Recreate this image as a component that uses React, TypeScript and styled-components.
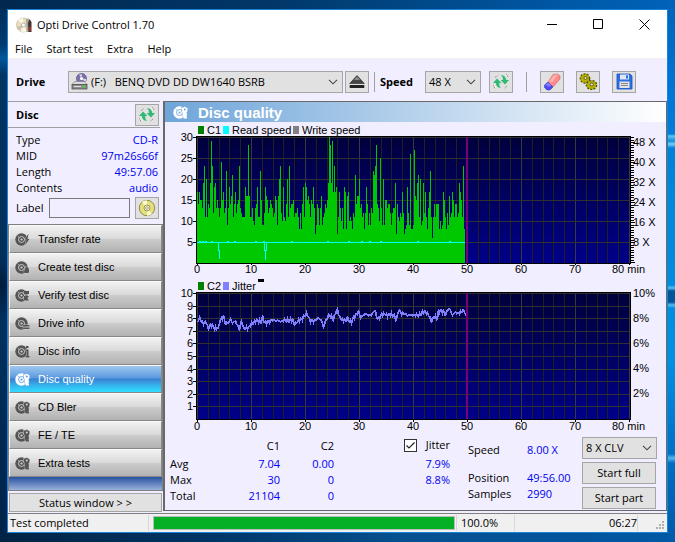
import React from 'react';
import styled, { createGlobalStyle, css } from 'styled-components';

const ui = '"Open Sans", "Noto Sans", sans-serif';
const arial = '"Liberation Sans", Arial, sans-serif';

const GlobalStyle = createGlobalStyle`
  * { box-sizing: border-box; }
  body { margin: 0; font: 11px/16px ${ui}; color: #000; }
  button, select, input { font: inherit; color: inherit; margin: 0; }
  svg { display: block; }
`;

const Desktop = styled.div`
  min-height: 100vh;
  padding: 9px 7px;
  display: flex;
  background:
    linear-gradient(180deg, transparent 0 134px, #5cc8f2 136px, #0b8ee0 141px, #7bd0f2 144px, transparent 148px 285px,
      #54c0ee 288px, #00559c 291px 302px, #54c0ee 305px, transparent 308px 454px, #55b8ee 458px, transparent 463px) right / 7px 100% no-repeat,
    linear-gradient(180deg, #0062b8 0, #0078d7 100px, #0088dc 200px, #0090e4 360px, #0068bc 480px, #005aa8) right / 7px 100% no-repeat,
    linear-gradient(90deg, #01284f, #013768 40%, #0059a8 85%, #0062b8) top / 100% 9px no-repeat,
    linear-gradient(90deg, #012343, #003465 30%, #06508f 60%, #0058a4) bottom / 100% 9px no-repeat,
    linear-gradient(180deg, #012b54, #003c70 45px, #00569a 58px, #003463 75px, #012f5a 260px, #001c3b 285px, #00315f 320px, #002348 540px) left / 7px 100% no-repeat,
    #0073cc;
`;

const AppWindow = styled.main`
  flex: 1;
  min-width: 0;
  display: flex;
  flex-direction: column;
  border: 1px solid #1883d7;
  background: #f0eeff;
`;

const TitleBar = styled.header`
  height: 29px;
  padding-left: 8px;
  display: flex;
  align-items: center;
  gap: 5px;
  background: #fff;
`;
const Title = styled.h1`
  flex: 1;
  margin: 0;
  font-size: 11px;
  font-weight: 400;
`;
const CaptionButtons = styled.div`
  display: flex;
`;
const CaptionButton = styled.button`
  width: 46px;
  height: 29px;
  padding: 0;
  border: 0;
  background: none;
  display: grid;
  place-items: center;
`;

const MenuBar = styled.nav`
  height: 19px;
  padding: 1px 0 0 7px;
  display: flex;
  align-items: center;
  gap: 14px;
  background: #fff;
`;
const MenuButton = styled.button`
  padding: 0;
  border: 0;
  background: none;
`;

const Toolbar = styled.div`
  height: 43px;
  padding: 3px 31px 0 8px;
  display: flex;
  align-items: center;
  border-top: 1px solid #f0f0f0;
`;
const ToolLabel = styled.label<{ $width: number }>`
  width: ${p => p.$width}px;
  font-weight: 700;
`;
const Divider = styled.span<{ $gap: number }>`
  width: 1px;
  height: 20px;
  margin: 0 ${p => p.$gap}px;
  background: #a0a0a0;
`;
const face = css`
  border: 1px solid #a5a5a5;
  background: #e1e1e1;
`;
const IconButton = styled.button`
  ${face}
  width: 24px;
  height: 22px;
  padding: 0;
  display: grid;
  place-items: center;
  flex: none;
`;
const ToolGroup = styled.div<{ $gap: number }>`
  display: flex;
  gap: ${p => p.$gap}px;
`;

const SelectBox = styled.div<{ $icon?: boolean; $width?: number }>`
  ${face}
  height: 22px;
  display: grid;
  align-items: center;
  ${p => (p.$width ? `width: ${p.$width}px; flex: none;` : 'flex: 1; min-width: 0; margin-right: 2px;')}
  & > * { grid-area: 1 / 1; }
  select {
    width: 100%;
    height: 20px;
    padding: 0 18px 0 ${p => (p.$icon ? 22 : 3)}px;
    border: 0;
    background: none;
    appearance: none;
    white-space: pre;
  }
  svg { pointer-events: none; }
  svg.chevron { justify-self: end; margin-right: 4px; }
  svg.lead { margin-left: 2px; }
`;

const Body = styled.div`
  flex: 1;
  display: grid;
  grid-template-columns: 155px minmax(0, 1fr);
`;

const Sidebar = styled.aside`
  display: flex;
  flex-direction: column;
`;
const DiscHeader = styled.div`
  height: 27px;
  margin-right: 3px;
  padding: 0 1px 0 8px;
  display: flex;
  align-items: center;
  justify-content: space-between;
  border-top: 1px solid #a0a0a0;
  border-bottom: 1px solid #a0a0a0;
  h2 { margin: 0; font-size: 11px; }
`;
const DiscFacts = styled.dl`
  margin: 0;
  padding: 4px 5px 0 8px;
  display: grid;
  grid-template-columns: auto 1fr;
  grid-auto-rows: 16px;
  dt, dd { margin: 0; }
  dd { text-align: right; color: #0000f0; }
`;
const LabelRow = styled.div`
  height: 28px;
  padding: 0 4px 4px 8px;
  display: flex;
  align-items: center;
  justify-content: space-between;
  gap: 5px;
  input {
    flex: 1;
    min-width: 0;
    height: 20px;
    border: 1px solid #7a7a7a;
    background: #f0eeff;
  }
`;
const TestList = styled.nav`
  flex: 1;
  display: flex;
  flex-direction: column;
  border: 1px solid #808080;
  background: linear-gradient(#1f4a9c, #9ab2da) bottom / 100% 14px no-repeat;
`;
const TestButton = styled.button<{ $on?: boolean }>`
  height: 28px;
  padding: 0 5px;
  display: flex;
  align-items: center;
  gap: 8px;
  border: 1px solid #f8f8f8;
  border-right-color: #888;
  border-bottom: 1px solid #888;
  font: 11px ${arial};
  color: ${p => (p.$on ? '#fff' : '#000')};
  background: ${p =>
    p.$on
      ? 'linear-gradient(#9fc8ef, #5c9be0 45%, #3a80d2 50%, #35b4ee 75%, #30dcff)'
      : 'linear-gradient(#f2f2f2, #dadada 48%, #cbcbcb 52%, #b2b2b2)'};
`;
const StatusToggle = styled.button`
  ${face}
  height: 19px;
  margin: 2px 1px 1px 1px;
  padding: 0;
`;

const Panel = styled.section`
  display: flex;
  flex-direction: column;
  border: 1px solid #696969;
  border-left-width: 2px;
  margin-bottom: 2px;
`;
const PanelTitle = styled.h2`
  height: 20px;
  margin: 0;
  padding-left: 8px;
  display: flex;
  align-items: center;
  gap: 10px;
  color: #fff;
  font: 700 15px ${arial};
  background: linear-gradient(90deg, #6fa5d9, #fff);
`;
const Plot = styled.svg`
  width: 100%;
  height: auto;
  font: 11px ${arial};
`;

const Results = styled.div`
  height: 78px;
  padding: 5px 8px 0 5px;
  display: grid;
  grid-template-columns: 280px minmax(0, 1fr) 76px;
  column-gap: 18px;
`;
const StatTable = styled.table`
  width: 280px;
  height: 64px;
  table-layout: fixed;
  border-collapse: collapse;
  th, td { height: 16px; padding: 0; font-weight: 400; text-align: right; }
  th:first-child { text-align: left; width: 56px; }
  td { color: #0000f0; }
  th:nth-child(2) { width: 54px; }
  th:nth-child(3) { width: 54px; }
`;
const CheckLabel = styled.label`
  display: inline-flex;
  align-items: center;
  gap: 9px;
  input {
    appearance: none;
    width: 13px;
    height: 13px;
    border: 1px solid #333;
    background: #fff url("data:image/svg+xml,%3Csvg xmlns='http://www.w3.org/2000/svg' viewBox='0 0 11 11'%3E%3Cpath d='M1.5 5.5l2.5 2.5 5.5-5.5' fill='none' stroke='%23222' stroke-width='1.2'/%3E%3C/svg%3E");
  }
`;
const Progress = styled.dl`
  margin: 0;
  padding-top: 5px;
  display: grid;
  grid-template-columns: 59px 1fr;
  grid-template-rows: 28px 16px 16px;
  dt, dd { margin: 0; white-space: nowrap; }
  dd { color: #0000f0; }
`;
const Actions = styled.div`
  display: flex;
  flex-direction: column;
  gap: 3px;
`;
const PushButton = styled.button`
  ${face}
  width: 74px;
  height: 22px;
  padding: 0;
`;

const StatusBar = styled.footer`
  height: 19px;
  display: grid;
  grid-template-columns: 141px minmax(0, 1fr) 58px 123px 29px;
  align-items: center;
  border-top: 1px solid #808080;
  background: #f0f0f0;
  & > * { height: 16px; border-right: 1px solid #d7d7d7; }
  & > :last-child { border: 0; }
`;
const StatusText = styled.span<{ $end?: boolean; $pad?: number }>`
  padding-left: ${p => p.$pad ?? 2}px;
  text-align: ${p => (p.$end ? 'right' : 'left')};
`;
const BarCell = styled.div`
  display: flex;
  padding: 1px 1px 1px 4px;
  progress {
    appearance: none;
    width: 100%;
    height: 14px;
    border: 1px solid #bcbcbc;
    background: #e6e6e6;
  }
  progress::-webkit-progress-bar { background: #e6e6e6; }
  progress::-webkit-progress-value { background: #06b025; }
`;
const Grip = styled.div`
  display: flex;
  justify-content: flex-end;
  align-items: flex-end;
  padding: 0 2px 1px 0;
`;

/* ---------- icons ---------- */

const Chevron = () => (
  <svg className="chevron" width="10" height="6" viewBox="0 0 10 6">
    <path d="M1 .8l4 4 4-4" fill="none" stroke="#444" strokeWidth="1.1" />
  </svg>
);

const AppIcon = () => (
  <svg width="16" height="16" viewBox="0 0 16 16">
    <circle cx="7.5" cy="8" r="7" fill="#e8dfb8" stroke="#b5ac90" strokeWidth=".6" />
    <path d="M7.5 8L2 3.500A7 7 0 0 1 7 1zM7.500 8l3.500 6A7 7 0 0 1 5 14.500z" fill="#fbf8ea" />
    <path d="M7.500 8L.8 10A7 7 0 0 0 3 13.500z" fill="#c6c0ac" />
    <circle cx="7.500" cy="8" r="2" fill="#fff" stroke="#999" strokeWidth=".7" />
    <path d="M10 2.500l2.500-1.500 1 5v9h-3z" fill="#a9a7a0" />
    <path d="M12 6l1.500-4L15.500 5v10h-3z" fill="#42342e" />
    <path d="M13 10h2v4h-2z" fill="#a32f25" />
  </svg>
);

const DriveIcon = () => (
  <svg className="lead" width="17" height="17" viewBox="0 0 17 17">
    <circle cx="10.500" cy="5.500" r="5" fill="#7c72ad" stroke="#50497a" strokeWidth=".7" />
    <path d="M10.500 5.500L8 1.200h3zM10.500 5.500l4 3.500 1-3z" fill="#d5d0ee" />
    <circle cx="10.500" cy="5.500" r="1.500" fill="#fff" />
    <path d="M3.500 8.500h10l2.500 3H1z" fill="#d9d9d9" stroke="#777" strokeWidth=".6" />
    <rect x="1" y="11.500" width="15" height="4.500" fill="#8e8e8e" stroke="#444" strokeWidth=".7" />
    <path d="M3 13.500h7" stroke="#ddd" />
    <rect x="12" y="12.500" width="2" height="2" fill="#2fe02f" />
  </svg>
);

const RefreshIcon = () => (
  <svg width="18" height="18" viewBox="0 0 18 18">
    <path d="M5 5.500L9.500 10H7.200c0 2 .3 3.500 1.500 5-3-.3-4.700-2-4.900-5H1z" fill="#2fba73" />
    <path d="M13 11.500L8.700 7H11c0-2-.5-3.500-2-5 3 .2 5 2 5.300 5H17z" fill="#2fba73" />
    <path d="M3 4.500l3-2M15 13l-3 2.500" stroke="#777" strokeDasharray="1 1" />
    <path d="M13.500 2l2 2.500M2 12l2 3" stroke="#fff" />
    <path d="M14.500 1.500l1.500 2.500M1.500 12.500l1.500 3" stroke="#666" strokeDasharray="1 1" />
  </svg>
);

const EjectIcon = () => (
  <svg width="16" height="14" viewBox="0 0 16 14">
    <path d="M8 .5L15.300 8.500H.7z" fill="#444" stroke="#222" strokeWidth=".6" />
    <path d="M8 1.500l3 3.500H5z" fill="#8a8a8a" />
    <rect x=".7" y="10" width="14.600" height="3" fill="#222" />
  </svg>
);

const EraserIcon = () => (
  <svg width="18" height="18" viewBox="0 0 18 18">
    <path d="M10 1.500L5 9l5 5 7-8V3l-2.500-2z" fill="#ff8a8a" stroke="#c35454" strokeWidth=".5" />
    <path d="M11 2l4-.5L9.500 9 6 8.500z" fill="#ffb3ae" />
    <path d="M5 9l-3.500 3v2.500L4 17h3l3-3z" fill="#4d48f2" stroke="#3430b6" strokeWidth=".5" />
    <path d="M5 9.500L2.500 12l3.500 2 2.500-2z" fill="#7f7bff" />
  </svg>
);

const GearsIcon = () => (
  <svg width="19" height="18" viewBox="0 0 19 18" fill="#b5b000" stroke="#4e4c00">
    <circle cx="6" cy="5.500" r="4.500" strokeWidth="1.600" strokeDasharray="2 1.200" />
    <circle cx="6" cy="5.500" r="3.900" stroke="none" />
    <circle cx="6.500" cy="5" r="1.500" fill="#e1e1e1" strokeWidth=".8" />
    <ellipse cx="12.500" cy="12" rx="5" ry="4.300" strokeWidth="1.600" strokeDasharray="2 1.200" />
    <ellipse cx="12.500" cy="12" rx="4.500" ry="3.800" stroke="none" />
    <ellipse cx="12.800" cy="11.500" rx="1.700" ry="1.400" fill="#e1e1e1" strokeWidth=".8" />
  </svg>
);

const SaveIcon = () => (
  <svg width="17" height="17" viewBox="0 0 17 17">
    <path d="M1 1h13l2 2v13H1z" fill="#2f6fe4" stroke="#1a4fc0" strokeWidth=".8" />
    <rect x="4" y="1.500" width="9" height="5" fill="#dfe6f5" />
    <rect x="10" y="2.300" width="2" height="3.200" fill="#2f6fe4" />
    <rect x="3.500" y="8.500" width="10" height="6.500" fill="#e3e3e3" />
    <path d="M5 10.500h7M5 12.500h7" stroke="#888" />
  </svg>
);

const LabelDiscIcon = () => (
  <svg width="18" height="18" viewBox="0 0 18 18">
    <circle cx="9" cy="9" r="7.700" fill="#e6e07c" stroke="#77733a" strokeWidth=".8" />
    <path d="M9 9L4 3a7.500 7.500 0 0 1 5-1.700zM9 9l5 6a7.500 7.500 0 0 1-5 1.700z" fill="#fbfad0" />
    <circle cx="9" cy="9" r="3" fill="#f3f0b4" stroke="#8c8848" strokeWidth=".8" />
    <circle cx="9" cy="9" r="1.300" fill="#fff" stroke="#777" strokeWidth=".6" />
  </svg>
);

type Mark = 'bolt' | 'flame' | 'search' | 'drive' | 'info' | 'gear';
const marks: Record<Mark, React.ReactNode> = {
  bolt: <path d="M13.500 2L9.500 7.500h2L10 13l4.500-6h-2z" />,
  flame: <path d="M11 6c3 2 4 4 2.500 7h-4C8 11 11 9 11 6z" />,
  search: <path d="M9 3h5v3H9zM9 8h5l-1.500 2 1.500 2.500H9z" />,
  drive: <path d="M8 9h6.500v1.500H8zM8 11.500h6.500V13H8z" />,
  info: <path d="M11 2h2.500v2H11zM10.500 5.500h3V12h1v1.500h-4V12h1V7h-1z" />,
  gear: <path d="M8.500 2.500h2l1-1 1.500 1 1.500.5v3l-1 1.500.5 2-.5 2.500H14v1.500h-3.500l-.5-3z" />,
};
const DiscIcon = ({ mark, color, back }: { mark: Mark; color: string; back: string }) => (
  <svg width="15" height="15" viewBox="0 0 15 15" fill={color}>
    <circle cx="6.500" cy="7.500" r="6.200" />
    <circle cx="6.500" cy="7.500" r="3" fill="none" stroke={back} strokeWidth=".9" />
    <circle cx="6.500" cy="7.500" r="1.100" fill={back} />
    <path d="M2.500 3.500l2 2" stroke={back} strokeWidth=".6" />
    <g stroke={back} strokeWidth=".8" paintOrder="stroke">{marks[mark]}</g>
    {mark === 'gear' && <circle cx="11.800" cy="4.500" r="1" fill={back} />}
  </svg>
);

/* ---------- data ---------- */

const c1Errors = [
  17, 14, 17, 15, 15, 13, 19, 23, 11, 20, 11, 14, 13, 19, 29, 23, 12, 18, 19, 13, 15, 13, 11, 13, 24, 15, 17, 12, 13, 22,
  9, 13, 18, 14, 16, 21, 11, 14, 17, 12, 14, 15, 23, 13, 12, 11, 11, 11, 18, 16, 16, 28, 16, 11, 11, 13, 10, 9, 13, 14,
  18, 11, 11, 22, 15, 9, 9, 12, 18, 16, 15, 12, 13, 15, 14, 13, 11, 12, 16, 15, 9, 16, 20, 23, 12, 10, 18, 11, 10, 14,
  20, 11, 23, 13, 14, 14, 15, 11, 12, 12, 13, 11, 8, 12, 8, 14, 18, 11, 19, 18, 15, 16, 14, 11, 15, 14, 18, 13, 7, 9,
  14, 13, 9, 13, 16, 9, 11, 12, 14, 13, 15, 19, 30, 28, 19, 29, 17, 23, 17, 18, 7, 11, 17, 13, 10, 13, 8, 18, 17, 8,
  16, 17, 10, 11, 10, 8, 12, 11, 21, 14, 16, 16, 20, 13, 14, 11, 12, 8, 12, 18, 14, 9, 12, 9, 13, 12, 22, 21, 23, 28,
  14, 13, 10, 25, 13, 9, 20, 9, 15, 15, 13, 14, 14, 12, 9, 12, 13, 13, 19, 7, 14, 11, 10, 12, 11, 17, 12, 7, 8, 9,
  18, 12, 9, 26, 8, 8, 9, 27, 16, 15, 19, 21, 11, 20, 9, 10, 19, 12, 17, 11, 8, 13, 17, 22, 11, 6, 11, 14, 11, 14,
  14, 14, 8, 10, 8, 9, 17, 15, 11, 8, 12, 9, 16, 11, 12, 17, 15, 11, 14, 14, 11, 12, 19, 17, 15, 11, 23, 8,
];

const jitterKeys: [number, number][] = [
  [0, 7.8], [3, 8], [5, 7.6], [9, 7.6], [11, 7.2], [13, 7.5], [16, 7.2], [21, 7.2], [22, 7.7], [26, 8.1], [28, 7.6], [31, 7.6],
  [33, 7.9], [35, 7.6], [38, 7.8], [42, 7.1], [44, 7.8], [46, 7.2], [52, 7.2], [54, 7.6], [60, 7.8], [64, 7.7], [65, 8.1],
  [67, 7.6], [74, 7.8], [95, 7.8], [97, 7.5], [100, 7.8], [105, 7.9], [107, 8.3], [110, 8.3], [112, 7.8], [118, 7.8],
  [121, 8], [124, 7.8], [126, 7.3], [128, 7.8], [132, 8.3], [136, 7.9], [138, 8.4], [140, 8.6], [142, 8.1], [148, 7.7],
  [150, 8], [153, 7.7], [155, 7.8], [158, 8.2], [161, 8.5], [163, 8], [167, 8.3], [175, 8.3], [177, 8.7], [179, 8.2],
  [181, 7.9], [184, 8.2], [187, 8.4], [190, 8.2], [196, 8.3], [199, 7.8], [201, 8.6], [204, 8.4], [210, 8.2], [214, 8.3],
  [221, 8.2], [226, 8.5], [231, 8.3], [233, 8], [234, 7.7], [237, 8.1], [240, 8], [241, 8.6], [246, 8.5], [248, 8.3],
  [251, 8.7], [253, 8.6], [255, 8.2], [258, 8.5], [262, 8.4], [266, 8.6], [269, 8.3],
];
const ripple = [0, 0.1, -0.1, 0.15, 0, -0.15, 0.1, -0.1, 0.05, 0.15, -0.1];
const jitterAt = (i: number) => {
  const n = Math.max(1, jitterKeys.findIndex(k => k[0] >= i));
  const [x0, y0] = jitterKeys[n - 1];
  const [x1, y1] = jitterKeys[n];
  return y0 + ((y1 - y0) * (i - x0)) / (x1 - x0) + ripple[(i * 7 + (i >> 2)) % ripple.length];
};

const LEFT = 32;
const WIDTH = 432;
const HEIGHT = 126;
const range = (n: number) => Array.from({ length: n }, (_, i) => i);

const Frame = ({ top, rows, id }: { top: number; rows: number; id: string }) => (
  <g shapeRendering="crispEdges">
    <defs>
      <linearGradient id={id} x2="0" y2="1">
        <stop offset="0" stopColor="#00003c" />
        <stop offset="1" stopColor="#000088" />
      </linearGradient>
    </defs>
    <rect x={LEFT - 1} y={top - 1} width={WIDTH + 3} height={HEIGHT + 2} fill="#000" />
    <rect x={LEFT} y={top} width={WIDTH + 1} height={HEIGHT} fill={`url(#${id})`} />
    {range(41).map(i => (
      <rect key={i} x={Math.round(LEFT + i * 10.8)} y={top} width="1" height={HEIGHT} fill={i % 5 ? '#202020' : '#3a3a3a'} />
    ))}
    {range(rows).map(i => (
      <rect key={i} x={LEFT} y={Math.round(top + (i * HEIGHT) / rows)} width={WIDTH} height="1" fill="#303030" />
    ))}
  </g>
);

const MinuteAxis = ({ y }: { y: number }) => (
  <g textAnchor="middle">
    {range(8).map(i => (
      <text key={i} x={LEFT + i * 54} y={y}>{i * 10}</text>
    ))}
    <text x={LEFT + 415} y={y} textAnchor="start">80 min</text>
    {range(9).map(i => (
      <rect key={i} x={LEFT + i * 54} y={y - 10} width="1" height="2" />
    ))}
  </g>
);

const C1Chart = () => {
  const top = 15;
  const bottom = top + HEIGHT;
  return (
    <Plot viewBox="0 0 501 155" role="img" aria-label="C1 errors and read speed">
      <rect x="33" y="4" width="6" height="8" fill="#008000" />
      <text x="42" y="12">C1</text>
      <rect x="58" y="4" width="6" height="8" fill="#00ffff" />
      <text x="67" y="12">Read speed</text>
      <rect x="128" y="4" width="6" height="8" fill="#808080" />
      <text x="137" y="12">Write speed</text>
      <Frame top={top} rows={6} id="c1back" />
      <g shapeRendering="crispEdges">
        {c1Errors.map((v, i) => (
          <rect key={i} x={LEFT + i} y={Math.round(bottom - v * 4.2)} width="1" height={Math.round(v * 4.2)} fill="#00c800" />
        ))}
        <rect x="301" y={top} width="2" height={HEIGHT} fill="#780078" />
        <rect x={LEFT} y="120" width="268" height="1" fill="#00ffff" />
        {[2, 5, 8, 14, 30, 37, 58, 66, 94, 130, 151, 164, 172, 183, 220, 252].map(x => (
          <rect key={x} x={LEFT + x} y="119" width="2" height="1" fill="#00ffff" />
        ))}
        <path d="M53.500 120v9M54.500 128v9M99.500 120v9M100.500 128v10M101.500 120v9" stroke="#00ffff" />
        {range(51).map(i => (
          <rect key={i} x="466" y={Math.round(140 - i * 2.5)} width={i % 8 ? 3 : 4} height="1" />
        ))}
        {range(6).map(i => (
          <rect key={i} x="28" y={top + i * 21} width="3" height="1" />
        ))}
      </g>
      <g textAnchor="end">
        {range(6).map(i => (
          <text key={i} x="28" y={top + 4 + i * 21}>{30 - i * 5}</text>
        ))}
      </g>
      {range(6).map(i => (
        <text key={i} x="468" y={24 + i * 20}>{48 - i * 8} X</text>
      ))}
      <MinuteAxis y={151} />
    </Plot>
  );
};

const JitterChart = () => {
  const top = 16;
  const bottom = top + HEIGHT;
  const points = range(270).map(i => `${LEFT + i + 0.5},${(bottom - jitterAt(i) * 12.6).toFixed(1)}`).join(' ');
  return (
    <Plot viewBox="0 0 501 155" role="img" aria-label="C2 errors and jitter">
      <rect x="33" y="5" width="6" height="8" fill="#008000" />
      <text x="42" y="13">C2</text>
      <rect x="58" y="5" width="6" height="8" fill="#8080ff" />
      <text x="67" y="13">Jitter</text>
      <rect x="93" y="2" width="6" height="3" />
      <Frame top={top} rows={10} id="c2back" />
      <g shapeRendering="crispEdges">
        <polyline points={points} fill="none" stroke="#8080ff" strokeWidth="1.600" />
        <rect x="301" y={top} width="2" height={HEIGHT} fill="#780078" />
        {range(10).map(i => (
          <rect key={i} x="28" y={Math.round(top + i * 12.6)} width="3" height="1" />
        ))}
      </g>
      <g textAnchor="end">
        {range(10).map(i => (
          <text key={i} x="28" y={Math.round(top + 4 + i * 12.6)}>{10 - i}</text>
        ))}
      </g>
      {range(5).map(i => (
        <text key={i} x="468" y={top + 4 + i * 25}>{10 - i * 2}%</text>
      ))}
      <MinuteAxis y={153} />
    </Plot>
  );
};

const tests: { name: string; mark: Mark }[] = [
  { name: 'Transfer rate', mark: 'bolt' },
  { name: 'Create test disc', mark: 'flame' },
  { name: 'Verify test disc', mark: 'search' },
  { name: 'Drive info', mark: 'drive' },
  { name: 'Disc info', mark: 'info' },
  { name: 'Disc quality', mark: 'gear' },
  { name: 'CD Bler', mark: 'gear' },
  { name: 'FE / TE', mark: 'gear' },
  { name: 'Extra tests', mark: 'gear' },
];

const discFacts = [['Type', 'CD-R'], ['MID', '97m26s66f'], ['Length', '49:57.06'], ['Contents', 'audio']];

export default function App() {
  return (
    <>
      <GlobalStyle />
      <Desktop>
        <AppWindow>
          <TitleBar>
            <AppIcon />
            <Title>Opti Drive Control 1.70</Title>
            <CaptionButtons>
              <CaptionButton aria-label="Minimize">
                <svg width="11" height="11"><path d="M0 5.500h10" stroke="#000" /></svg>
              </CaptionButton>
              <CaptionButton aria-label="Maximize">
                <svg width="11" height="11"><path d="M.5.500h9v9h-9z" fill="none" stroke="#000" /></svg>
              </CaptionButton>
              <CaptionButton aria-label="Close">
                <svg width="11" height="11"><path d="M.5.500l10 10m0-10l-10 10" stroke="#000" /></svg>
              </CaptionButton>
            </CaptionButtons>
          </TitleBar>
          <MenuBar>
            {['File', 'Start test', 'Extra', 'Help'].map(m => <MenuButton key={m}>{m}</MenuButton>)}
          </MenuBar>
          <Toolbar>
            <ToolLabel $width={52} htmlFor="drive">Drive</ToolLabel>
            <SelectBox $icon>
              <DriveIcon />
              <select id="drive">
                <option>{'(F:)\u00a0\u00a0 BENQ DVD DD DW1640 BSRB'}</option>
              </select>
              <Chevron />
            </SelectBox>
            <IconButton aria-label="Eject"><EjectIcon /></IconButton>
            <Divider $gap={5} />
            <ToolLabel $width={45} htmlFor="speed">Speed</ToolLabel>
            <ToolGroup $gap={8}>
              <SelectBox $width={56}>
                <select id="speed"><option>48 X</option></select>
                <Chevron />
              </SelectBox>
              <IconButton aria-label="Refresh speed"><RefreshIcon /></IconButton>
            </ToolGroup>
            <Divider $gap={13} />
            <ToolGroup $gap={12}>
              <IconButton aria-label="Erase"><EraserIcon /></IconButton>
              <IconButton aria-label="Options"><GearsIcon /></IconButton>
              <IconButton aria-label="Save"><SaveIcon /></IconButton>
            </ToolGroup>
          </Toolbar>
          <Body>
            <Sidebar>
              <DiscHeader>
                <h2>Disc</h2>
                <IconButton aria-label="Refresh disc"><RefreshIcon /></IconButton>
              </DiscHeader>
              <DiscFacts>
                {discFacts.map(([k, v]) => (
                  <React.Fragment key={k}><dt>{k}</dt><dd>{v}</dd></React.Fragment>
                ))}
              </DiscFacts>
              <LabelRow>
                <label htmlFor="label">Label</label>
                <input id="label" />
                <IconButton aria-label="Read label"><LabelDiscIcon /></IconButton>
              </LabelRow>
              <TestList>
                {tests.map(t => {
                  const on = t.name === 'Disc quality';
                  return (
                    <TestButton key={t.name} $on={on}>
                      <DiscIcon mark={t.mark} color={on ? '#fff' : '#555'} back={on ? '#5c9be0' : '#d4d4d4'} />
                      {t.name}
                    </TestButton>
                  );
                })}
              </TestList>
              <StatusToggle>Status window &gt; &gt;</StatusToggle>
            </Sidebar>
            <Panel>
              <PanelTitle>
                <DiscIcon mark="gear" color="#fff" back="#74a8da" />
                Disc quality
              </PanelTitle>
              <C1Chart />
              <JitterChart />
              <Results>
                <StatTable>
                  <thead>
                    <tr>
                      <th aria-label="Statistic" />
                      <th>C1</th>
                      <th>C2</th>
                      <th><CheckLabel><input type="checkbox" defaultChecked />Jitter</CheckLabel></th>
                    </tr>
                  </thead>
                  <tbody>
                    <tr><th>Avg</th><td>7.04</td><td>0.00</td><td>7.9%</td></tr>
                    <tr><th>Max</th><td>30</td><td>0</td><td>8.8%</td></tr>
                    <tr><th>Total</th><td>21104</td><td>0</td><td /></tr>
                  </tbody>
                </StatTable>
                <Progress>
                  <dt>Speed</dt><dd>8.00 X</dd>
                  <dt>Position</dt><dd>49:56.00</dd>
                  <dt>Samples</dt><dd>2990</dd>
                </Progress>
                <Actions>
                  <SelectBox $width={75}>
                    <select aria-label="Test speed"><option>8 X CLV</option></select>
                    <Chevron />
                  </SelectBox>
                  <PushButton>Start full</PushButton>
                  <PushButton>Start part</PushButton>
                </Actions>
              </Results>
            </Panel>
          </Body>
          <StatusBar>
            <StatusText>Test completed</StatusText>
            <BarCell><progress value={100} max={100} aria-label="Test progress" /></BarCell>
            <StatusText $pad={4}>100.0%</StatusText>
            <StatusText $end>06:27</StatusText>
            <Grip>
              <svg width="9" height="9" fill="#b0b0b0">
                <path d="M6 0h2v2H6zM3 3h2v2H3zM6 3h2v2H6zM0 6h2v2H0zM3 6h2v2H3zM6 6h2v2H6z" />
              </svg>
            </Grip>
          </StatusBar>
        </AppWindow>
      </Desktop>
    </>
  );
}
